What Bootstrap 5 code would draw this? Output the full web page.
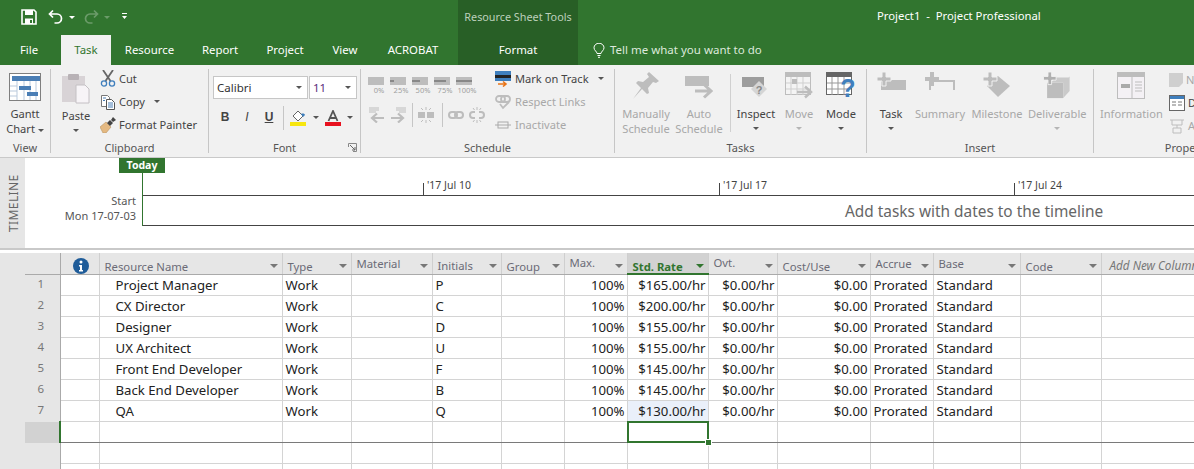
<!DOCTYPE html>
<html lang="en"><head><meta charset="utf-8"><title>Project1 - Project Professional</title>
<link href="https://cdn.jsdelivr.net/npm/bootstrap@5.3.0/dist/css/bootstrap.min.css" rel="stylesheet">
<style>
html,body{width:1194px;height:469px;overflow:hidden;margin:0;background:#fff;font-family:"Noto Sans","Open Sans",sans-serif;font-size:12px;color:#444}
svg{display:block;flex:none}
.tbar{height:65px;background:#31752f;color:#fff}
.tcol-a{width:458px}.tcol-b{width:120px;background:#285f26}.tcol-c{flex:1}
.trow-top{height:35px}
.trow-tab{height:30px}
.qat{padding:9px 0 0 21px}
.qat svg{margin-right:5px}
.qat .redo{margin-left:3px}
.tab-i{height:30px;color:#fff;font-size:11.4px;line-height:30px;text-align:center;padding:0;text-decoration:none;border:0}
.tab-f{width:61px;padding-right:3px}.tab-t{width:50px;background:#f1f1f1;color:#31752f}.tab-r{width:77px}.tab-rp{width:64px}.tab-p{width:66px}.tab-v{width:54px}.tab-ac{width:86px;padding-right:4px}
.ctx-t{color:#bcd0bb;font-size:10.8px;line-height:33px;text-align:center}
.fmt{line-height:30px;text-align:center;color:#fff;font-size:11.4px}
.doc-title{padding-left:299px;line-height:31px;font-size:11.3px;white-space:pre}
.tell{padding-left:15px;color:#dde9dc;line-height:30px;gap:5px;font-size:11.5px}
.rib{height:93px;background:#f1f1f1;border-bottom:1px solid #c9c9c9;padding-top:4px;color:#444;font-size:11.1px;line-height:15px;overflow:hidden}
.grp{height:84px;border-right:1px solid #c6c6c6;position:relative;flex:none}
.g-v{width:51px}.g-c{width:158px}.g-f{width:152px}.g-s{width:254px}.g-t{width:252px}.g-i{width:227px}.g-p{width:195px;border-right:0}
.gbody{height:70px}
.glabel{height:14px;line-height:18px;text-align:center;color:#555;font-size:11px;white-space:nowrap}
.bigb{text-align:center;white-space:nowrap;line-height:15px}
.bigb svg{margin:0 auto 7px}
.dis{color:#a8a8a8}
.car{display:inline-block;width:0;height:0;border-left:3px solid transparent;border-right:3px solid transparent;border-top:3px solid #555;vertical-align:middle}
.dis .car{border-top-color:#b5b5b5}
.caret-line{height:15px;display:flex;align-items:center;justify-content:center}
.smb{height:23px;gap:3px;white-space:nowrap;align-items:center}
.b-gantt svg{margin:4px auto 5px}
.b-paste{width:34px;margin-left:8px;padding-top:4px}
.b-paste svg{margin:0 0 4px 2px}
.pa-col{margin:-2px 0 0 7px}
.combo{height:23px;background:#fff;border:1px solid #c6c6c6;display:flex;align-items:center;color:#333;font-size:11.5px;padding:0 5px 0 3px;justify-content:space-between}
.cb-a{width:95px}.cb-b{width:48px;margin-left:1px;color:#5a2b7c}
.frow{padding:7px 0 0 4px}
.frow2{padding:6px 0 0 5px;align-items:center;height:31px}
.fbtn{width:22px;text-align:center;font-family:"Liberation Sans",sans-serif;font-size:12px;color:#444;font-weight:700}
.vsep{width:1px;height:24px;background:#c6c6c6;flex:none}
.launch{position:absolute;right:3px;bottom:1px}
.pct{width:22px;text-align:center;font-size:7.5px;line-height:9px;color:#a0a0a0}
.pct svg{margin-bottom:1px}
.sch-left{width:130px;padding:8px 0 0 7px}
.sch-row2{padding-top:8px;align-items:center;gap:5px}
.sch-right{margin:-2px 0 0 4px}
.sch-right svg{margin-right:1px}
.mk{color:#444}
.b-man{width:50px;margin-left:6px}.b-auto{width:50px;margin-left:3px}.b-ins{width:40px;margin-left:5px}.b-mov{width:38px;margin-left:4px}.b-mod{width:36px;margin-left:5px}
.tsep{width:1px;height:58px;background:#d0d0d0;margin:5px 0 0 6px;flex:none}
.b-itask{width:30px;margin-left:9px}.b-sum{width:52px;margin-left:8px}.b-mil{width:52px;margin-left:5px}.b-del{width:58px;margin-left:5px}
.b-info{width:62px;margin-left:6px}
.prop-small{margin:-1px 0 0 7px}
.prop-small .smb{height:23px}
.tline{height:92px;border-bottom:2px solid #c9c9c9}
.strip{width:25px;background:#e6e6e6;flex:none}
.tl-word{writing-mode:vertical-rl;transform:rotate(180deg);font-size:12px;letter-spacing:.4px;color:#666;padding-right:5px;height:74px}
.canvas{position:relative;flex:1;overflow:hidden;background:#fff}
.today{position:absolute;left:94px;top:0;width:46px;height:15px;background:#31752f;color:#fff;font-weight:700;font-size:10.5px;line-height:15px;text-align:center}
.tv{position:absolute;left:117px;top:15px;width:1px;height:53px;background:#31752f}
.th1{position:absolute;left:118px;top:37px;right:0;height:1px;background:#444}
.th2{position:absolute;left:118px;top:67px;right:0;height:1px;background:#444}
.tk{position:absolute;top:25px;width:1px;height:12px;background:#444}
.tk1{left:398px}.tk2{left:694px}.tk3{left:989px}
.tkl{position:absolute;top:20px;font-size:10.5px;line-height:14px;color:#444;white-space:nowrap}
.tl1{left:402px}.tl2{left:698px}.tl3{left:993px}
.tstart{position:absolute;right:calc(100% - 111px);top:35px;text-align:right;font-size:11px;line-height:15px;color:#555;white-space:nowrap}
.addt{position:absolute;left:820px;top:43px;font-size:15.4px;line-height:21px;color:#666;white-space:nowrap}
.gap3{height:3px;background:#fff}
.sheet-wrap{height:216px;overflow:hidden;background:#fff}
.sheet{table-layout:fixed;border-collapse:collapse;width:1169px;margin:0;font-size:13.2px;color:#222;align-self:flex-start;flex:none}
.sheet>tbody>tr>td,.sheet>thead>tr>th{padding:0 3px;height:21px;line-height:20px;border:1px solid #d4d4d4;border-top:0;white-space:nowrap;overflow:hidden;background:#fff;color:#222;box-shadow:none;vertical-align:middle}
.c0{width:35px}.c1{width:39px}.c2{width:183px}.c3{width:69px}.c4{width:81px}.c5{width:69px}.c6{width:63px}.c7{width:63px}.c8{width:81px}.c9{width:69px}.c10{width:93px}.c11{width:63px}.c12{width:87px}.c13{width:81px}.c14{width:93px}
.sheet>thead>tr>th{background:#e6e6e6;color:#6b6b76;font-weight:400;font-size:11.3px;border-color:#cfcfcf;border-bottom:1px solid #aaa;position:relative;vertical-align:bottom;line-height:14px;padding-left:5px}
.sheet>thead>tr>th.rh-c{border-left:0;border-right:1px solid #aaa}
.sheet>thead>tr>th.up{vertical-align:top;line-height:20px}
.sheet>thead>tr>th.up2{vertical-align:top;line-height:18px;padding-top:2px}
.sheet>thead>tr>th.mid{line-height:17px}
.sheet>thead>tr>th.sel{background:#d2d2d2;color:#31752f;font-weight:700;border-bottom:2px solid #31752f;line-height:13px}
.sheet>thead>tr>th.addc{font-style:italic;color:#777;border-right:0;padding-left:8px;font-size:11.7px}
.harr{position:absolute;right:4px;top:11px;width:0;height:0;border-left:4px solid transparent;border-right:4px solid transparent;border-top:4px solid #777}
.sel .harr{border-top-color:#31752f}
.sheet>tbody>tr>td.rn{background:#e6e6e6;color:#777;text-align:center;font-size:11.5px;line-height:18px;border:0;border-right:1px solid #aaa;vertical-align:top;padding:0 3px 0 0}
.sheet>tbody>tr>td.nm{padding-left:16px}
.sheet>tbody>tr>td.nr{text-align:right;padding-right:2px}
.sheet>tbody>tr>td.tint{background:#eaf0fa}
.sheet>tbody>tr.act>td{border-top:1px solid #7a7a7a;border-bottom:1px solid #7a7a7a}
.sheet>tbody>tr.act>td.rn{background:#d2d2d2;border-top:0;border-bottom:0;border-right:2px solid #31752f}
.sheet>tbody>tr>td.cur{position:relative;overflow:visible}
.cur-box{position:absolute;left:-1px;top:-1px;right:-1px;bottom:-1px;border:2px solid #31752f}
.cur-h{position:absolute;right:-4px;bottom:-4px;width:5px;height:5px;background:#31752f;outline:1px solid #fff}
</style></head><body>
<header class="tbar d-flex">
  <div class="tcol-a">
    <div class="trow-top qat d-flex align-items-start">
      <svg width="16" height="16" viewBox="0 0 16 16"><path d="M1 1h12l2 2v12H1z" fill="none" stroke="#fff" stroke-width="1.6"/><rect x="4" y="1" width="8" height="5" fill="#fff"/><rect x="4" y="9.5" width="8" height="5.5" fill="#fff"/><rect x="9" y="11" width="2" height="3" fill="#31752f"/></svg>
      <svg class="ms-2" width="16" height="16" viewBox="0 0 16 16"><path d="M5 1.500 1.500 5 5 8.500M2 5h7a4.500 4.500 0 0 1 0 9H6.500" fill="none" stroke="#fff" stroke-width="1.7"/></svg>
      <svg width="6" height="16" viewBox="0 0 6 16"><path d="M0 7h6l-3 3z" fill="#fff"/></svg>
      <svg class="redo" width="16" height="16" viewBox="0 0 16 16"><path d="M11 1.500 14.500 5 11 8.500M14 5H7a4.500 4.500 0 0 0 0 9h2.500" fill="none" stroke="#6b9b69" stroke-width="1.7"/></svg>
      <svg width="6" height="16" viewBox="0 0 6 16"><path d="M0 7h6l-3 3z" fill="#6b9b69"/></svg>
      <svg class="ms-2" width="7" height="16" viewBox="0 0 7 16"><path d="M1 4h5v1H1zM1 7h5l-2.500 3z" fill="#fff"/></svg>
    </div>
    <nav class="trow-tab nav">
      <a class="nav-link tab-i tab-f" href="#">File</a><a class="nav-link tab-i tab-t" href="#">Task</a><a class="nav-link tab-i tab-r" href="#">Resource</a><a class="nav-link tab-i tab-rp" href="#">Report</a><a class="nav-link tab-i tab-p" href="#">Project</a><a class="nav-link tab-i tab-v" href="#">View</a><a class="nav-link tab-i tab-ac" href="#">ACROBAT</a>
    </nav>
  </div>
  <div class="tcol-b">
    <div class="trow-top ctx-t">Resource Sheet Tools</div>
    <div class="trow-tab fmt">Format</div>
  </div>
  <div class="tcol-c">
    <div class="trow-top doc-title">Project1  -  Project Professional</div>
    <div class="trow-tab tell d-flex align-items-center">
      <svg width="12" height="15" viewBox="0 0 12 15"><path d="M4 10.500C4 8.500 1 7.500 1 4.800a5 4.600 0 0 1 10 0C11 7.500 8 8.500 8 10.500zM4.500 12.500h3M5 14.300h2" fill="none" stroke="#fff" stroke-width="1"/></svg>
      <span>Tell me what you want to do</span>
    </div>
  </div>
</header>

<section class="rib d-flex">
  <div class="grp g-v">
    <div class="gbody d-flex justify-content-center">
      <div class="bigb b-gantt">
        <svg width="32" height="28" viewBox="0 0 32 28"><rect x=".5" y=".5" width="31" height="27" fill="#fff" stroke="#7f7f7f"/><rect x="3" y="3" width="28" height="5" fill="#4a7eb5"/><path d="M8 8v19M15 8v19M21 8v19M27 8v19M1 13h7M1 18h7M1 23h7" stroke="#b9c9dc" fill="none"/><rect x="10" y="13" width="12" height="4" fill="#4a7eb5"/><rect x="18" y="19" width="11" height="4" fill="#4a7eb5"/></svg>
        <div>Gantt</div>
        <div>Chart <span class="car"></span></div>
      </div>
    </div>
    <div class="glabel">View</div>
  </div>
  <div class="grp g-c">
    <div class="gbody d-flex">
      <div class="bigb b-paste">
        <svg width="29" height="31" viewBox="0 0 29 31"><rect x="1" y="3" width="23" height="26" fill="#d8d3d6"/><rect x="7" y="1" width="11" height="6" rx="1" fill="#b8b2b6"/><path d="M15 12h9l4 4v14H15z" fill="#f7f4f7" stroke="#c4c0c4"/></svg>
        <div>Paste</div>
        <div class="caret-line"><span class="car"></span></div>
      </div>
      <div class="pa-col">
        <div class="d-flex smb"><svg width="16" height="17" viewBox="0 0 16 17"><path d="M3 0l7.500 11M13 0 5.500 11" stroke="#666" stroke-width="1.800" fill="none"/><circle cx="4" cy="13.500" r="2.600" fill="none" stroke="#3f7fbd" stroke-width="1.300"/><circle cx="12" cy="13.500" r="2.600" fill="none" stroke="#3f7fbd" stroke-width="1.300"/></svg><span>Cut</span></div>
        <div class="d-flex smb"><svg width="16" height="16" viewBox="0 0 16 16"><path d="M1.500 1.500h6l2 2v9h-8z" fill="#fff" stroke="#777"/><path d="M6.500 5.500h5l3 3v7h-8z" fill="#fff" stroke="#555"/><path d="M3 4h3M3 6.500h2M8 9h5M8 11h5M8 13h5" stroke="#4a7eb5"/></svg><span>Copy</span><span class="car ms-2"></span></div>
        <div class="d-flex smb"><svg width="16" height="16" viewBox="0 0 16 16"><path d="M0 10 6 5l5 5-5 6H3z" fill="#e4b982" stroke="#b99363" stroke-width=".6"/><path d="M7 6l3-3 3 3-3 3z" fill="#444"/><path d="M11 3l2-3 3 3-3 2z" fill="#444"/></svg><span>Format Painter</span></div>
      </div>
    </div>
    <div class="glabel">Clipboard</div>
  </div>
  <div class="grp g-f">
    <div class="gbody">
      <div class="frow d-flex">
        <div class="combo cb-a"><span>Calibri</span><span class="car"></span></div>
        <div class="combo cb-b"><span>11</span><span class="car"></span></div>
      </div>
      <div class="frow2 d-flex">
        <span class="fbtn">B</span><span class="fbtn fst-italic fw-normal">I</span><span class="fbtn text-decoration-underline">U</span>
        <span class="vsep ms-1"></span>
        <svg class="ms-2" width="17" height="16" viewBox="0 0 17 16"><path d="M3 6l5-5 5 5-5 5z" fill="#fff" stroke="#666"/><path d="M11 4c2-1 4 0 4 1l-2 2z" fill="#3f7fbd"/><rect y="12" width="16" height="4" fill="#f7e60f"/></svg>
        <span class="car ms-2"></span>
        <svg class="ms-2" width="16" height="16" viewBox="0 0 16 16"><path d="M3.500 11 8 1l4.500 10M5 8h6" fill="none" stroke="#555" stroke-width="1.800"/><rect y="12" width="16" height="4" fill="#e8111f"/></svg>
        <span class="car ms-2"></span>
      </div>
    </div>
    <div class="glabel">Font</div>
    <svg class="launch" width="9" height="9" viewBox="0 0 9 9"><path d="M.5 4V.5H8.500V8.500H5" fill="none" stroke="#888"/><path d="M2 2l5 5M7 4v3H4" fill="none" stroke="#666"/></svg>
  </div>
  <div class="grp g-s">
    <div class="gbody d-flex">
      <div class="sch-left">
        <div class="d-flex">
          <div class="pct"><svg width="16" height="8" viewBox="0 0 16 8"><rect width="16" height="8" fill="#bdbdbd"/></svg>0%</div>
          <div class="pct"><svg width="16" height="8" viewBox="0 0 16 8"><rect width="16" height="8" fill="#bdbdbd"/><rect y="3" width="4" height="2" fill="#888"/></svg>25%</div>
          <div class="pct"><svg width="16" height="8" viewBox="0 0 16 8"><rect width="16" height="8" fill="#bdbdbd"/><rect y="3" width="8" height="2" fill="#888"/></svg>50%</div>
          <div class="pct"><svg width="16" height="8" viewBox="0 0 16 8"><rect width="16" height="8" fill="#bdbdbd"/><rect y="3" width="12" height="2" fill="#888"/></svg>75%</div>
          <div class="pct"><svg width="16" height="8" viewBox="0 0 16 8"><rect width="16" height="8" fill="#bdbdbd"/><rect y="3" width="16" height="2" fill="#888"/></svg>100%</div>
        </div>
        <div class="sch-row2 d-flex">
          <svg width="17" height="16" viewBox="0 0 17 16"><path d="M1 1h10M1 3h10M1 5h7" stroke="#bdbdbd"/><path d="M16 11H4M9 6.500 4 11l5 4.500" fill="none" stroke="#bdbdbd" stroke-width="2.200"/></svg>
          <svg width="17" height="16" viewBox="0 0 17 16"><path d="M6 1h10M6 3h10M9 5h7" stroke="#bdbdbd"/><path d="M1 11h12M8 6.500l5 4.500-5 4.500" fill="none" stroke="#bdbdbd" stroke-width="2.200"/></svg>
          <span class="vsep"></span>
          <svg width="16" height="16" viewBox="0 0 16 16"><rect y="5" width="7" height="6" fill="#bdbdbd"/><rect x="9" y="5" width="7" height="6" fill="#bdbdbd"/><path d="M8 0v3M3 1l2 2M13 1l-2 2M8 13v3M3 15l2-2M13 15l-2-2" stroke="#bdbdbd"/></svg>
          <span class="vsep ms-1"></span>
          <svg width="16" height="16" viewBox="0 0 16 16"><rect x="1" y="5" width="8" height="6" rx="3" fill="none" stroke="#bdbdbd" stroke-width="2"/><rect x="7" y="5" width="8" height="6" rx="3" fill="none" stroke="#bdbdbd" stroke-width="2"/></svg>
          <svg width="16" height="16" viewBox="0 0 16 16"><path d="M6 5H4a3 3 0 0 0 0 6h2M10 5h2a3 3 0 0 1 0 6h-2" fill="none" stroke="#bdbdbd" stroke-width="2"/><path d="M8 0v3M4 1l1.500 2M12 1l-1.500 2M8 13v3M4 15l1.500-2M12 15l-1.500-2" stroke="#bdbdbd"/></svg>
        </div>
      </div>
      <div class="sch-right">
        <div class="d-flex smb mk"><svg width="16" height="16" viewBox="0 0 16 16"><rect width="16" height="10" fill="#3f7fbd"/><rect y="4" width="16" height="3" fill="#222"/><path d="M3 13h7M8 10.500l3 2.500-3 2.500" fill="none" stroke="#e8751a" stroke-width="1.600"/></svg><span>Mark on Track</span><span class="car ms-2"></span></div>
        <div class="d-flex smb dis"><svg width="16" height="16" viewBox="0 0 16 16"><rect x="1" y="2" width="9" height="6" rx="3" fill="none" stroke="#bdbdbd" stroke-width="1.800"/><rect x="6" y="2" width="9" height="6" rx="3" fill="none" stroke="#bdbdbd" stroke-width="1.800"/><path d="M5 10l3 4 6-6" fill="none" stroke="#bdbdbd" stroke-width="1.800"/></svg><span>Respect Links</span></div>
        <div class="d-flex smb dis"><svg width="16" height="16" viewBox="0 0 16 16"><rect x="3" y="5" width="10" height="6" fill="none" stroke="#aaa"/><path d="M0 8h16" stroke="#aaa"/></svg><span>Inactivate</span></div>
      </div>
    </div>
    <div class="glabel">Schedule</div>
  </div>
  <div class="grp g-t">
    <div class="gbody d-flex">
      <div class="bigb dis b-man pt-1"><svg width="28" height="27" viewBox="0 0 28 27"><path d="M17 0l10 9-3 2-3-1-5 6 1 5-2 1-5-5-9 10 8-11-5-5 2-2 5 1 6-5-2-3z" fill="#bdbdbd"/></svg><div>Manually</div><div>Schedule</div></div>
      <div class="bigb dis b-auto pt-1"><svg width="28" height="27" viewBox="0 0 28 27"><rect y="4" width="24" height="10" fill="#bdbdbd"/><path d="M10 19h15M19 12.500l7 6.500-7 6.500" fill="none" stroke="#bdbdbd" stroke-width="3"/></svg><div>Auto</div><div>Schedule</div></div>
      <span class="tsep"></span>
      <div class="bigb b-ins pt-1 text-nowrap"><svg width="28" height="27" viewBox="0 0 28 27"><rect y="5" width="22" height="10" fill="#9d9d9d"/><path d="M17 9l8 8-8 8-8-8z" fill="#d5d5d5"/><text x="17" y="21.500" font-size="11" font-weight="700" fill="#888" text-anchor="middle" font-family="Liberation Sans">?</text></svg><div>Inspect</div><div class="caret-line"><span class="car"></span></div></div>
      <div class="bigb dis b-mov pt-1"><svg width="28" height="27" viewBox="0 0 28 27"><rect x=".5" y=".5" width="25" height="22" fill="#f4f4f4" stroke="#bdbdbd"/><rect x="1" y="1" width="24" height="4" fill="#bdbdbd"/><path d="M6 5v18M12 5v18M18 5v18M1 11h24M1 17h24" stroke="#cfcfcf"/><rect x="7" y="7" width="5" height="5" fill="#bdbdbd"/><path d="M12 20h14M20 14.500l6 5.500-6 5.500" fill="none" stroke="#bdbdbd" stroke-width="2.500"/></svg><div>Move</div><div class="caret-line"><span class="car"></span></div></div>
      <div class="bigb b-mod pt-1"><svg width="30" height="27" viewBox="0 0 30 27"><rect x=".5" y=".5" width="25" height="22" fill="#fff" stroke="#666"/><rect x="1" y="1" width="24" height="4" fill="#666"/><path d="M6 5v18M12 5v18M18 5v18M1 11h24M1 17h24" stroke="#999"/><text x="22" y="25" font-size="25" font-weight="700" fill="#3f7fbd" text-anchor="middle" font-family="Liberation Sans">?</text></svg><div>Mode</div><div class="caret-line"><span class="car"></span></div></div>
    </div>
    <div class="glabel">Tasks</div>
  </div>
  <div class="grp g-i">
    <div class="gbody d-flex">
      <div class="bigb b-itask pt-1"><svg width="29" height="27" viewBox="0 0 29 27"><rect x="4" y="8" width="25" height="10" fill="#bdbdbd"/><path d="M5 0h4v5h5v4H9v5H5V9H0V5h5z" fill="#bdbdbd" stroke="#f1f1f1"/></svg><div>Task</div><div class="caret-line"><span class="car"></span></div></div>
      <div class="bigb dis b-sum pt-1"><svg width="30" height="27" viewBox="0 0 30 27"><path d="M5 0h4v5h5v4H9v5H5V9H0V5h5z" fill="#bdbdbd"/><path d="M5 9h24v9M5 9v9" fill="none" stroke="#bdbdbd" stroke-width="2"/></svg><div>Summary</div></div>
      <div class="bigb dis b-mil pt-1"><svg width="28" height="27" viewBox="0 0 28 27"><path d="M15 4l12 10-12 11L4 14z" fill="#bdbdbd"/><path d="M5 0h4v5h5v4H9v5H5V9H0V5h5z" fill="#bdbdbd" stroke="#f1f1f1"/></svg><div>Milestone</div></div>
      <div class="bigb dis b-del pt-1"><svg width="30" height="27" viewBox="0 0 30 30"><path d="M4 12h18v17H4z" fill="#bdbdbd"/><path d="M22 12l7-7v16l-7 8zM8 12l6-6h15l-7 6z" fill="#cacaca"/><path d="M5 0h4v5h5v4H9v5H5V9H0V5h5z" fill="#b0b0b0" stroke="#f1f1f1"/></svg><div>Deliverable</div><div class="caret-line"><span class="car"></span></div></div>
    </div>
    <div class="glabel">Insert</div>
  </div>
  <div class="grp g-p">
    <div class="gbody d-flex">
      <div class="bigb dis b-info pt-1"><svg width="28" height="27" viewBox="0 0 28 27"><rect x=".5" y=".5" width="27" height="26" fill="#f4f1f5" stroke="#bdbdbd"/><rect x="1" y="1" width="26" height="4" fill="#bdbdbd"/><rect x="4" y="12" width="9" height="4" fill="#aaa"/><path d="M15 5v21M18 10h7M18 13h7M18 16h7M18 19h7" stroke="#bdbdbd"/></svg><div>Information</div></div>
      <div class="prop-small">
        <div class="d-flex smb dis"><svg width="14" height="14" viewBox="0 0 14 14"><path d="M0 0h14v10l-4 4H0z" fill="#cfcfcf"/></svg><span>Notes</span></div>
        <div class="d-flex smb mk"><svg width="16" height="16" viewBox="0 0 16 16"><rect x=".5" y=".5" width="15" height="15" fill="#fff" stroke="#666"/><rect x="1" y="1" width="14" height="3" fill="#3f7fbd"/><path d="M3 7h4M9 7h4M3 10h4M9 10h4" stroke="#777"/></svg><span>Details</span></div>
        <div class="d-flex smb dis"><svg width="16" height="16" viewBox="0 0 16 16"><path d="M1 2h14M3 2v5h10V2M8 7v3M4 10h8v5H4z" fill="none" stroke="#bdbdbd"/></svg><span>Add to Timeline</span></div>
      </div>
    </div>
    <div class="glabel">Properties</div>
  </div>
</section>

<section class="tline d-flex">
  <div class="strip"><div class="tl-word">TIMELINE</div></div>
  <div class="canvas">
    <div class="today">Today</div>
    <div class="tv"></div>
    <div class="th1"></div><div class="th2"></div>
    <div class="tk tk1"></div><div class="tk tk2"></div><div class="tk tk3"></div>
    <div class="tkl tl1">'17 Jul 10</div><div class="tkl tl2">'17 Jul 17</div><div class="tkl tl3">'17 Jul 24</div>
    <div class="tstart">Start<br>Mon 17-07-03</div>
    <div class="addt">Add tasks with dates to the timeline</div>
  </div>
</section>
<div class="gap3"></div>
<section class="sheet-wrap d-flex">
  <div class="strip"></div>
  <table class="sheet table">
    <colgroup><col class="c0"><col class="c1"><col class="c2"><col class="c3"><col class="c4"><col class="c5"><col class="c6"><col class="c7"><col class="c8"><col class="c9"><col class="c10"><col class="c11"><col class="c12"><col class="c13"><col class="c14"></colgroup>
    <thead><tr>
      <th class="rh-c"></th>
      <th><svg class="mx-auto" width="16" height="16" viewBox="0 0 16 16"><circle cx="8" cy="8" r="8" fill="#1f5c99"/><circle cx="8" cy="4" r="1.500" fill="#fff"/><path d="M6 7h3v5h1v1.500H6V12h1V8.500H6z" fill="#fff"/></svg></th>
      <th>Resource Name<i class="harr"></i></th>
      <th>Type<i class="harr"></i></th>
      <th class="up2">Material<i class="harr"></i></th>
      <th class="mid">Initials<i class="harr"></i></th>
      <th>Group<i class="harr"></i></th>
      <th class="up">Max.<i class="harr"></i></th>
      <th class="sel">Std. Rate<i class="harr"></i></th>
      <th class="up">Ovt.<i class="harr"></i></th>
      <th>Cost/Use<i class="harr"></i></th>
      <th class="up2">Accrue<i class="harr"></i></th>
      <th class="up2">Base<i class="harr"></i></th>
      <th>Code<i class="harr"></i></th>
      <th class="addc mid">Add New Column</th>
    </tr></thead>
    <tbody>
      <tr><td class="rn">1</td><td></td><td class="nm">Project Manager</td><td>Work</td><td></td><td>P</td><td></td><td class="nr">100%</td><td class="nr">$165.00/hr</td><td class="nr">$0.00/hr</td><td class="nr">$0.00</td><td>Prorated</td><td>Standard</td><td></td><td></td></tr>
      <tr><td class="rn">2</td><td></td><td class="nm">CX Director</td><td>Work</td><td></td><td>C</td><td></td><td class="nr">100%</td><td class="nr">$200.00/hr</td><td class="nr">$0.00/hr</td><td class="nr">$0.00</td><td>Prorated</td><td>Standard</td><td></td><td></td></tr>
      <tr><td class="rn">3</td><td></td><td class="nm">Designer</td><td>Work</td><td></td><td>D</td><td></td><td class="nr">100%</td><td class="nr">$155.00/hr</td><td class="nr">$0.00/hr</td><td class="nr">$0.00</td><td>Prorated</td><td>Standard</td><td></td><td></td></tr>
      <tr><td class="rn">4</td><td></td><td class="nm">UX Architect</td><td>Work</td><td></td><td>U</td><td></td><td class="nr">100%</td><td class="nr">$155.00/hr</td><td class="nr">$0.00/hr</td><td class="nr">$0.00</td><td>Prorated</td><td>Standard</td><td></td><td></td></tr>
      <tr><td class="rn">5</td><td></td><td class="nm">Front End Developer</td><td>Work</td><td></td><td>F</td><td></td><td class="nr">100%</td><td class="nr">$145.00/hr</td><td class="nr">$0.00/hr</td><td class="nr">$0.00</td><td>Prorated</td><td>Standard</td><td></td><td></td></tr>
      <tr><td class="rn">6</td><td></td><td class="nm">Back End Developer</td><td>Work</td><td></td><td>B</td><td></td><td class="nr">100%</td><td class="nr">$145.00/hr</td><td class="nr">$0.00/hr</td><td class="nr">$0.00</td><td>Prorated</td><td>Standard</td><td></td><td></td></tr>
      <tr><td class="rn">7</td><td></td><td class="nm">QA</td><td>Work</td><td></td><td>Q</td><td></td><td class="nr">100%</td><td class="nr tint">$130.00/hr</td><td class="nr">$0.00/hr</td><td class="nr">$0.00</td><td>Prorated</td><td>Standard</td><td></td><td></td></tr>
      <tr class="act"><td class="rn"></td><td></td><td></td><td></td><td></td><td></td><td></td><td></td><td class="cur"><span class="cur-box"><i class="cur-h"></i></span></td><td></td><td></td><td></td><td></td><td></td><td></td></tr>
      <tr><td class="rn"></td><td></td><td></td><td></td><td></td><td></td><td></td><td></td><td></td><td></td><td></td><td></td><td></td><td></td><td></td></tr>
      <tr><td class="rn"></td><td></td><td></td><td></td><td></td><td></td><td></td><td></td><td></td><td></td><td></td><td></td><td></td><td></td><td></td></tr>
    </tbody>
  </table>
</section>
</body></html>
